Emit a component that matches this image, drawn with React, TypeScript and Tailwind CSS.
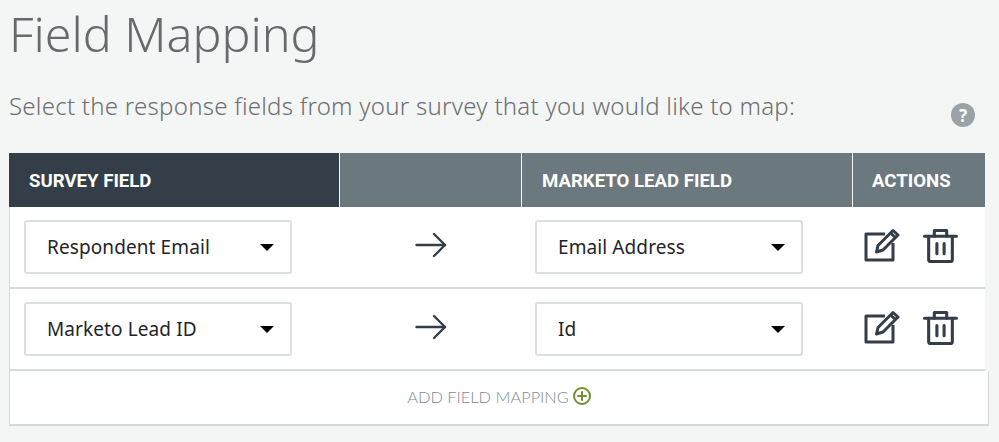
const fieldRows = [
  { survey: 'Respondent Email', lead: 'Email Address' },
  { survey: 'Marketo Lead ID', lead: 'Id' },
];

function SelectBox({ label }: { label: string }) {
  return (
    <div className="flex h-[54px] w-[268px] items-center justify-between rounded-[3px] border-2 border-[#dcdfe0] bg-white pl-[21px] pr-[16px]">
      <span className="text-[19px] tracking-[0.1px] text-[#1f2429]">{label}</span>
      <span className="h-0 w-0 border-x-[7px] border-t-[7px] border-x-transparent border-t-black" />
    </div>
  );
}

function ArrowIcon() {
  return (
    <svg className="mb-[4px]" width="32" height="26" viewBox="0 0 32 26" fill="none" stroke="#333e48" strokeWidth="2.4" strokeLinecap="round" strokeLinejoin="round">
      <path d="M1.5 13H30" />
      <path d="M19 2l11 11-11 11" />
    </svg>
  );
}

function EditIcon() {
  return (
    <svg className="mb-[4px]" width="36" height="34" viewBox="0 0 36 34" fill="none" stroke="#333e48" strokeWidth="3" strokeLinejoin="round">
      <path d="M21 6H2v26h27V15" />
      <path d="M14 17.5L29 2.5l5 4.5-15 15-6.5 2z" />
      <path d="M26.5 5l5 4.5" />
    </svg>
  );
}

function TrashIcon() {
  return (
    <svg className="mb-[4px]" width="35" height="35" viewBox="0 0 34 34" fill="none" stroke="#333e48" strokeWidth="3" strokeLinecap="round" strokeLinejoin="round">
      <path d="M1.5 8h31" />
      <path d="M11 8V2.5h12V8" />
      <path d="M5.5 8v22.5a2 2 0 0 0 2 2h19a2 2 0 0 0 2-2V8" />
      <path d="M13.5 15v10M20.5 15v10" />
    </svg>
  );
}

export default function App() {
  return (
    <div className="h-[442px] w-[999px] overflow-hidden bg-[#f4f6f5] pl-[9px] font-['Noto_Sans',sans-serif]">
      <h1 className="text-[48.4px] leading-[66px] font-light text-[#666a6c]">Field Mapping</h1>

      <div className="mt-[23px] flex items-start pr-[24px]">
        <p className="flex-1 text-[24px] leading-[34px] font-light tracking-[0.26px] text-[#6b6f71]">
          Select the response fields from your survey that you would like to map:
        </p>
        <span className="mt-[14px] flex h-[24px] w-[24px] items-center justify-center rounded-full bg-[#99a3a8] text-[17px] leading-none font-bold text-white">
          ?
        </span>
      </div>

      <div className="mt-[26px] w-[976px]">
        <div className="grid h-[54px] grid-cols-[330px_181px_330px_1fr] gap-px font-['Roboto',sans-serif] text-[18.6px] leading-[28px] font-bold text-white">
          <div className="flex items-center bg-[#333e48] pl-[20px] pt-px">SURVEY FIELD</div>
          <div className="bg-[#6b787e]" />
          <div className="flex items-center bg-[#6b787e] pl-[20px] pt-px">MARKETO LEAD FIELD</div>
          <div className="flex items-center bg-[#6b787e] pl-[19px] pt-px">ACTIONS</div>
        </div>

        {fieldRows.map((row) => (
          <div
            key={row.survey}
            className="grid h-[82px] grid-cols-[329px_181px_330px_1fr] items-center gap-px border-b-2 border-l border-[#d6d9d9] bg-white"
          >
            <div className="pl-[14px]">
              <SelectBox label={row.survey} />
            </div>
            <div className="flex justify-center">
              <ArrowIcon />
            </div>
            <div className="pl-[13px]">
              <SelectBox label={row.lead} />
            </div>
            <div className="flex items-center gap-[23px] pl-[11px]">
              <EditIcon />
              <TrashIcon />
            </div>
          </div>
        ))}
      </div>

      <div className="flex h-[55px] w-[980px] items-center justify-center gap-[4px] border-x border-b-2 border-[#d6d9d9] bg-white">
        <span className="font-['Lato',sans-serif] text-[16.4px] font-light text-[#7f8a90]">ADD FIELD MAPPING</span>
        <svg className="mb-[3px]" width="18" height="18" viewBox="0 0 18 18" fill="none" stroke="#6f9130" strokeWidth="2" strokeLinecap="round">
          <circle cx="9" cy="9" r="8" />
          <path d="M9 5v8M5 9h8" />
        </svg>
      </div>
    </div>
  );
}
